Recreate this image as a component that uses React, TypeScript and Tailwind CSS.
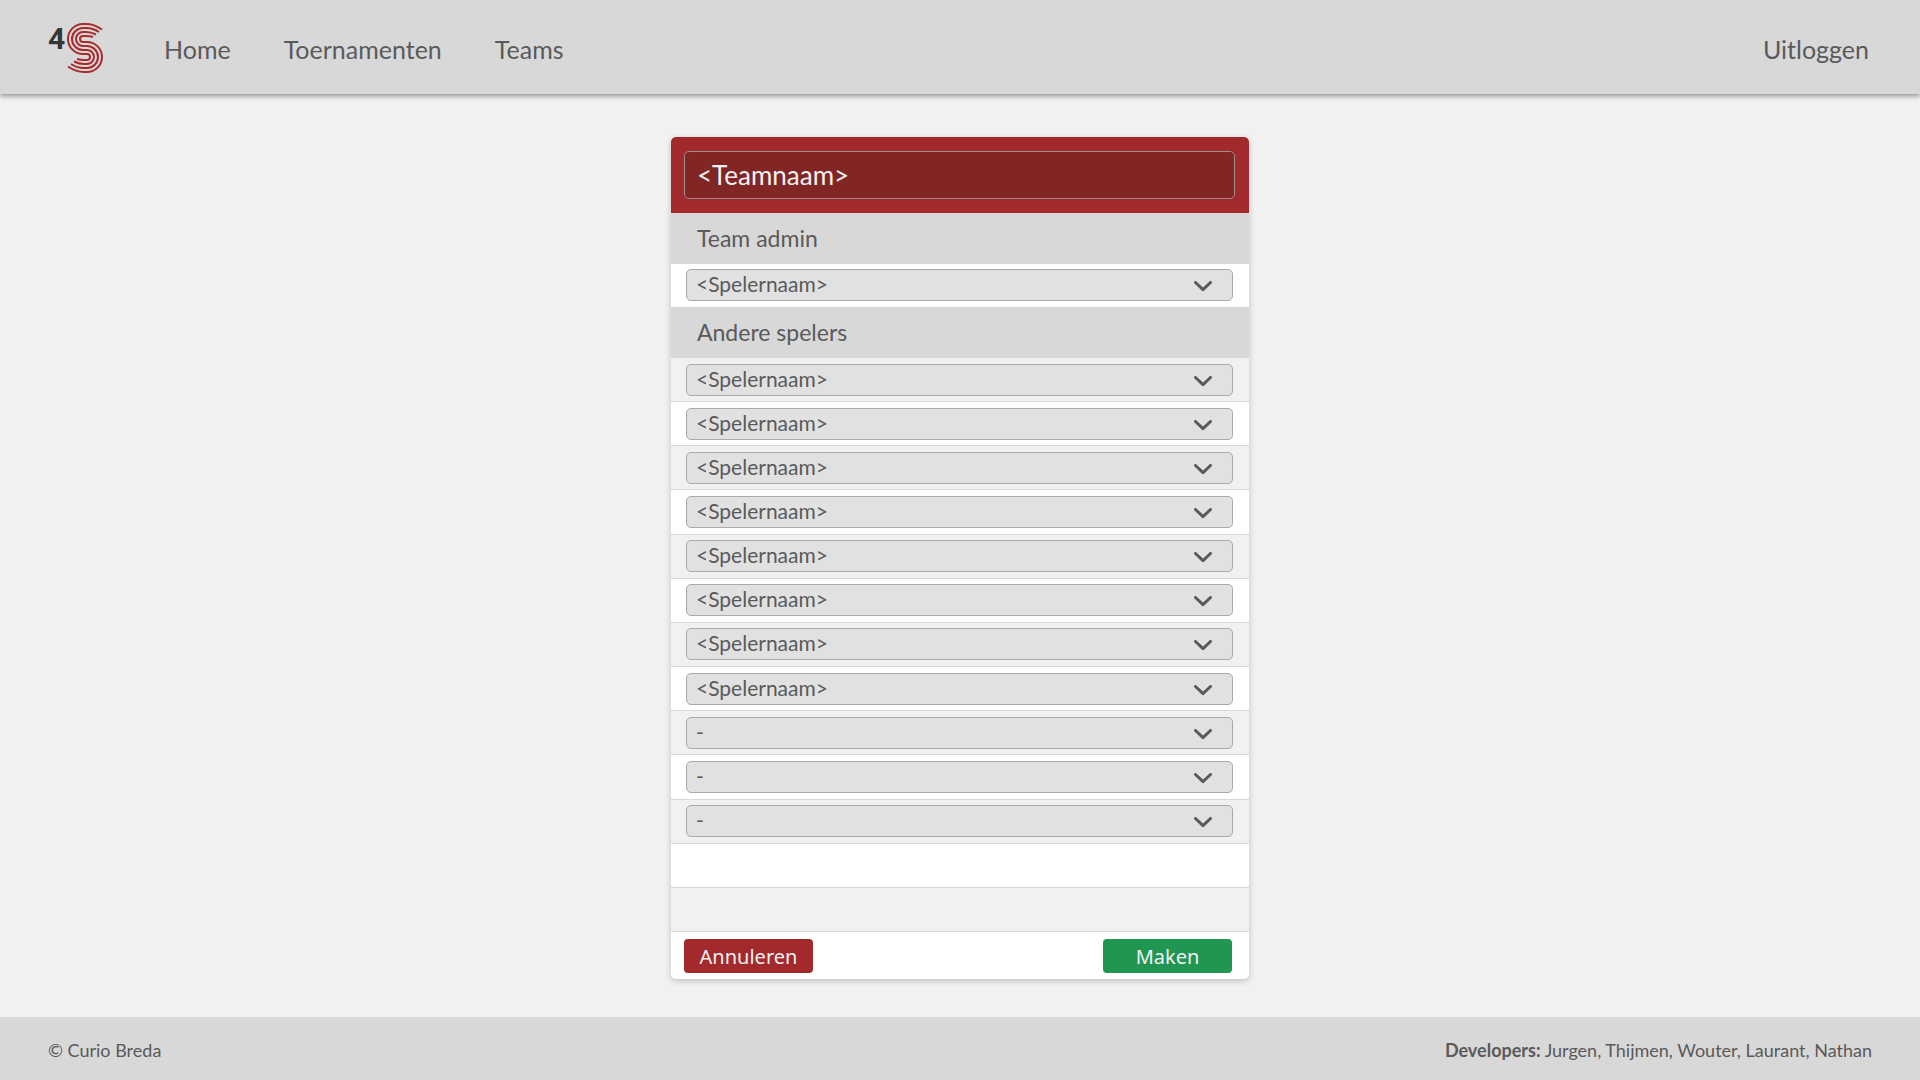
const players = [
  "<Spelernaam>", "<Spelernaam>", "<Spelernaam>", "<Spelernaam>",
  "<Spelernaam>", "<Spelernaam>", "<Spelernaam>", "<Spelernaam>",
  "-", "-", "-", null, null,
];

function Logo() {
  return (
    <svg viewBox="0 0 56 54" className="h-[54px] w-14" role="img" aria-label="4S">
      <text x="0" y="28" fill="#353535" fontFamily="Roboto, sans-serif" fontWeight="700" fontSize="30">4</text>
      <g fill="none" stroke="#a92b2e" strokeWidth="2">
        <path d="M54 8.500 Q46 3 38 3 H35 A15 15 0 0 0 35 33 H39 A3 3 0 0 1 39 39 H36 Q32 39 29 38" />
        <path d="M51 11 Q45 7 38 7 H35 A11 11 0 0 0 35 29 H39 A7 7 0 0 1 39 43 H36 Q31 43 26 40.500" />
        <path d="M48 13.500 Q43 11 38 11 H35 A7 7 0 0 0 35 25 H39 A11 11 0 0 1 39 47 H36 Q29 47 23 43" />
        <path d="M45 16 Q42 15 38 15 H35 A3 3 0 0 0 35 21 H39 A15 15 0 0 1 39 51 H36 Q28 51 20 45.500" />
      </g>
    </svg>
  );
}

function PlayerSelect({ value, label }: { value: string; label: string }) {
  return (
    <div className="relative w-full">
      <select
        aria-label={label}
        className="block h-8 w-full appearance-none rounded-[5px] border border-[#a9a9a9] bg-[#e1e1e1] pb-0.5 pl-[9px] pr-12 text-[21px] leading-7 text-[#5a5a5a]"
      >
        <option>{value}</option>
      </select>
      <svg viewBox="0 0 18 11" className="pointer-events-none absolute right-[21px] top-3 h-[11px] w-[18px]" aria-hidden="true">
        <path d="M1.500 1.500 L9 8.700 L16.500 1.500" fill="none" stroke="#5a5a5a" strokeWidth="3" strokeLinecap="round" strokeLinejoin="round" />
      </svg>
    </div>
  );
}

function SectionTitle({ children }: { children: string }) {
  return <h2 className="flex h-[51px] items-center bg-[#d8d8d8] px-[26px] text-[23px]">{children}</h2>;
}

export default function App() {
  return (
    <div className="flex min-h-screen flex-col bg-[#f1f1f1] font-['Lato',sans-serif] text-[#5a5a5a]">
      <header className="flex h-[94px] items-center bg-[#d8d8d8] pl-12 pr-[51px] shadow-[0_2px_5px_rgba(0,0,0,0.4)]">
        <a href="#" className="pt-0.5"><Logo /></a>
        <nav className="ml-15 flex flex-1 items-center gap-[53px] pt-1.5 text-[25px]">
          <a href="#">Home</a>
          <a href="#">Toernamenten</a>
          <a href="#">Teams</a>
          <a href="#" className="ml-auto">Uitloggen</a>
        </nav>
      </header>

      <main className="flex flex-1 justify-center px-4 pb-[38px] pt-[43px]">
        <form className="w-full max-w-[578px] self-start overflow-hidden rounded-[5px] bg-white shadow-[0_2px_6px_rgba(0,0,0,0.2)]">
          <div className="bg-[#a32a2c] py-[14px] pl-[13px] pr-[14px]">
            <input
              aria-label="Teamnaam"
              defaultValue="<Teamnaam>"
              className="block h-12 w-full rounded-[5px] border border-[#a08c8c] bg-[#812525] px-3 text-[26px] text-[#f1f1f1]"
            />
          </div>
          <SectionTitle>Team admin</SectionTitle>
          <div className="flex h-[43px] items-center pb-0.5 pl-[15px] pr-4">
            <PlayerSelect value="<Spelernaam>" label="Team admin" />
          </div>
          <SectionTitle>Andere spelers</SectionTitle>
          <ul className="grid h-[574px] auto-rows-fr">
            {players.map((player, i) => (
              <li key={i} className="flex items-center border-b border-[#d8d8d8] pl-[15px] pr-4 odd:bg-[#f1f1f1]">
                {player && <PlayerSelect value={player} label={`Speler ${i + 1}`} />}
              </li>
            ))}
          </ul>
          <div className="flex h-[47px] items-center justify-between pl-[13px] pr-[17px] font-['Noto_Sans',sans-serif] text-[20px] text-[#f1f1f1]">
            <button type="button" className="h-[34px] w-[129px] rounded-[4px] bg-[#a32a2c] pt-0.5">Annuleren</button>
            <button type="submit" className="h-[34px] w-[129px] rounded-[4px] bg-[#219653] pt-0.5">Maken</button>
          </div>
        </form>
      </main>

      <footer className="flex h-[63px] items-center justify-between bg-[#d8d8d8] px-12 pt-1 text-[18px]">
        <p>© Curio Breda</p>
        <p><strong className="font-bold">Developers:</strong> Jurgen, Thijmen, Wouter, Laurant, Nathan</p>
      </footer>
    </div>
  );
}
